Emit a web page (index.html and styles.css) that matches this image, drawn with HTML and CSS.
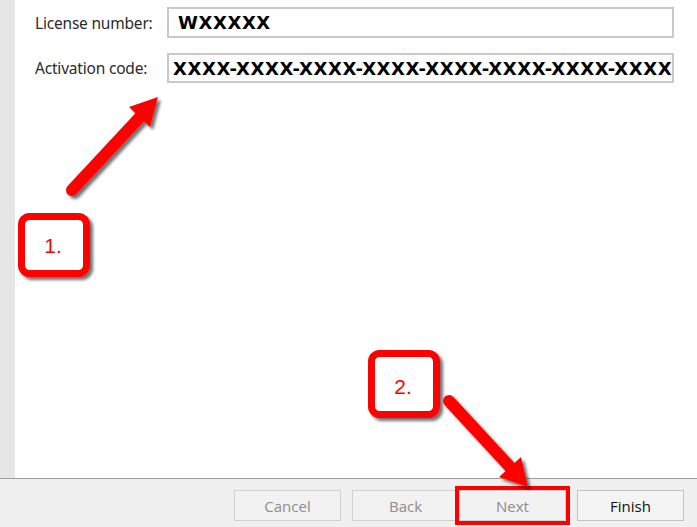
FILE: index.html
```html
<!DOCTYPE html>
<html lang="en">
<head>
    <meta charset="UTF-8">
    <title>Activation</title>
    <link rel="stylesheet" href="styles.css">
</head>
<body>
  <div class="wizard">
    <div class="content">
      <div class="side"></div>
      <div class="main">
        <div class="form">
          <label class="lbl" for="lic">License number:</label>
          <input class="field field-lic" id="lic" value="WXXXXX" readonly>
          <label class="lbl" for="code">Activation code:</label>
          <input class="field field-code" id="code" value="XXXX-XXXX-XXXX-XXXX-XXXX-XXXX-XXXX-XXXX" readonly>
        </div>
      </div>
    </div>

    <div class="footer">
      <button class="btn disabled">Cancel</button>
      <div class="pair">
        <button class="btn disabled">Back</button>
        <button class="btn disabled marked">Next</button>
      </div>
      <button class="btn">Finish</button>
    </div>
  </div>

  <!-- annotations drawn over the dialog -->
  <svg class="notes" width="697" height="527" viewBox="0 0 697 527">
    <defs>
      <filter id="shade" x="-20%" y="-20%" width="150%" height="150%">
        <feDropShadow dx="3" dy="3" stdDeviation="1.6" flood-color="#000" flood-opacity="0.55"/>
      </filter>
    </defs>
    <g filter="url(#shade)">
      <line x1="72" y1="190" x2="140" y2="117" stroke="#ff0000" stroke-width="12" stroke-linecap="round"/>
      <polygon points="158,97 150,127 129,107" fill="#ff0000"/>
      <line x1="449" y1="401" x2="510" y2="467" stroke="#ff0000" stroke-width="12" stroke-linecap="round"/>
      <polygon points="528,487 499,477 521,457" fill="#ff0000"/>
      <rect x="21.5" y="216.5" width="65" height="57" rx="8" fill="#fff" stroke="#ff0000" stroke-width="7"/>
      <rect x="371.5" y="353.5" width="65" height="61" rx="8" fill="#fff" stroke="#ff0000" stroke-width="7"/>
    </g>
    <text class="num" x="53" y="253" text-anchor="middle">1.</text>
    <text class="num" x="403" y="394" text-anchor="middle">2.</text>
  </svg>
</body>
</html>
```

FILE: styles.css
```css
html, body {
    margin: 0;
    width: 697px;
    height: 527px;
    overflow: hidden;
    background: #f0f0f0;
    font-family: "Noto Sans", "Open Sans", sans-serif;
}

.wizard {
    display: flex;
    flex-direction: column;
    height: 527px;
}

.content {
    display: flex;
    height: 478px;
}

.side {
    width: 15px;
    background: #e6e6e6;
}

.main {
    flex: 1;
    background: #fff;
    padding: 7px 23px 0 20px;
}

.form {
    display: grid;
    grid-template-columns: 132px 1fr;
    row-gap: 15px;
    align-items: center;
}

.lbl {
    font-size: 15.5px;
    letter-spacing: -0.2px;
    color: #2b2b2b;
    white-space: nowrap;
}

.field {
    box-sizing: border-box;
    width: 507px;
    height: 31px;
    border: 2px solid #c9c9c9;
    outline: none;
    padding: 0 0 0 5px;
    font: bold 18px "DejaVu Sans", sans-serif;
    letter-spacing: 0.6px;
    color: #000;
    background: #fff;
}

.field-lic {
    padding-left: 9px;
}

.field-code {
    padding-left: 4px;
    height: 30px;
}

.footer {
    flex: 1;
    display: flex;
    justify-content: flex-end;
    align-items: flex-start;
    gap: 11px;
    padding: 11px 13px 0 0;
    border-top: 1px solid #a0a0a0;
}

.pair {
    display: flex;
}

.btn {
    width: 107px;
    height: 31px;
    border: 1px solid #c4c4c4;
    background: #f4f4f4;
    font-family: "Open Sans", "Noto Sans", sans-serif;
    font-size: 15px;
    color: #111;
    padding: 0;
}

.btn.disabled {
    color: #8d8d8d;
    background: #f2f2f2;
    border-color: #d0d0d0;
}

.btn.marked {
    outline: 4px solid #ff0000;
    outline-offset: 0;
    position: relative;
    box-shadow: 1px 2px 3px rgba(0,0,0,0.4);
}

.notes {
    position: absolute;
    left: 0;
    top: 0;
    pointer-events: none;
}

.num {
    font-family: "Liberation Sans", Arial, sans-serif;
    font-size: 21px;
    fill: #ff0000;
}
```
